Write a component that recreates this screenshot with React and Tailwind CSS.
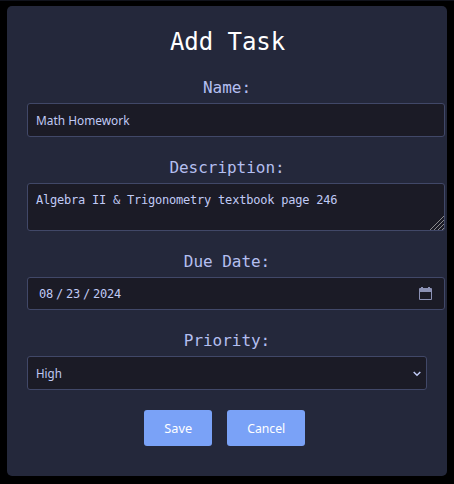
import React from 'react';

const mono = "font-['DejaVu_Sans_Mono',monospace]";
const sans = "font-['Noto_Sans',sans-serif]";
const box = 'rounded-[3px] border border-[#414868] bg-[#1b1b26] text-[#c0caf5] outline-none';

function Label({ htmlFor, children }) {
  return (
    <label htmlFor={htmlFor} className={`${mono} mb-[5px] block h-5 text-center text-base leading-5 tracking-[-0.03px] text-[#b4bff0]`}>
      {children}
    </label>
  );
}

export default function App() {
  return (
    <div className="h-[484px] w-[454px] overflow-hidden border-t border-[#11131c] bg-black pt-[5px] pl-[7px]">
      <form className="h-[470px] w-[440px] rounded-[5px] bg-[#24283b] px-5 pt-5">
        <h2 className={`${mono} h-[52px] pl-px text-center text-2xl leading-8 font-normal tracking-[-0.05px] text-white`}>Add Task</h2>

        <Label htmlFor="name">Name:</Label>
        <div id="name" className={`${box} ${sans} mb-[21px] flex h-[34px] w-[418px] items-center px-2 text-[13px]`}>
          <span className="origin-left scale-x-[0.914] pt-px">Math Homework</span>
        </div>

        <Label htmlFor="description">Description:</Label>
        <div className="relative mb-[21px] h-12 w-[418px]">
          <textarea
            id="description"
            spellCheck={false}
            defaultValue="Algebra II & Trigonometry textbook page 246"
            className={`${box} ${mono} block h-12 w-[418px] resize-none overflow-hidden px-2 py-2 text-[12px] leading-4 tracking-[-0.22px]`}
          />
          <svg className="absolute right-px bottom-px" width="14" height="14" viewBox="0 0 14 14" stroke="#8b8b8d" strokeWidth="1">
            <path d="M0 14 14 0M4 14 14 4M8 14 14 8M12 14 14 12" />
          </svg>
        </div>

        <Label htmlFor="date">Due Date:</Label>
        <div id="date" className={`${box} ${mono} mb-[21px] flex h-[33px] w-[418px] items-center justify-between pr-3 pl-[11px] text-[12px] tracking-[-0.22px]`}>
          <div className="flex">
            <span className="w-[14px]">08</span>
            <span className="w-[13px] text-center">/</span>
            <span className="w-[14px]">23</span>
            <span className="w-[13px] text-center">/</span>
            <span>2024</span>
          </div>
          <svg className="mb-px" width="13" height="13" viewBox="0 0 13 13" fill="#8b91b4">
            <path d="M2 0h2v1h5V0h2v1h1q1 0 1 1v10q0 1-1 1H1q-1 0-1-1V2q0-1 1-1h1zM1 5v7h11V5z" fillRule="evenodd" />
          </svg>
        </div>

        <Label htmlFor="priority">Priority:</Label>
        <button id="priority" type="button" className={`${box} ${sans} flex h-[34px] w-[400px] items-center justify-between pr-[5px] pl-2 text-[13px]`}>
          <span className="origin-left scale-x-[0.89] pt-px">High</span>
          <svg className="mt-px" width="8" height="6" viewBox="0 0 8 6" fill="none" stroke="#c0caf5" strokeWidth="1.5">
            <path d="M.7 1 4 4.3 7.3 1" />
          </svg>
        </button>

        <div className={`${sans} mt-5 flex justify-center gap-[15px] pr-[5px] text-[13px] text-white`}>
          <button type="button" className="h-9 w-[68px] rounded-[3px] bg-[#7aa2f7] pt-px">
            <span className="inline-block scale-x-[0.98]">Save</span>
          </button>
          <button type="button" className="h-9 w-[78px] rounded-[3px] bg-[#7aa2f7] pt-px">
            <span className="inline-block scale-x-[0.94]">Cancel</span>
          </button>
        </div>
      </form>
    </div>
  );
}
